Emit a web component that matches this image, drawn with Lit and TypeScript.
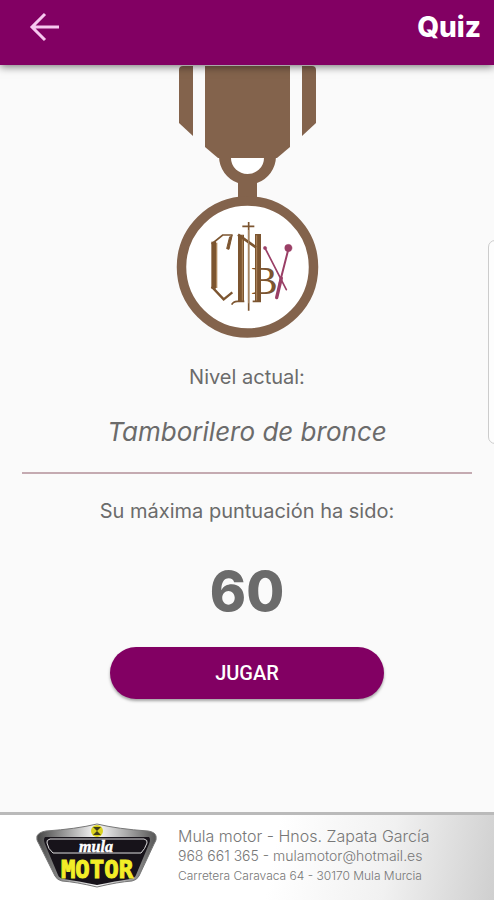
import { LitElement, html, css } from "lit";
import { customElement, property } from "lit/decorators.js";

@customElement("quiz-medal")
class QuizMedal extends LitElement {
  static styles = css`
    :host {
      display: block;
    }
    .medal {
      display: block;
      width: 151px;
      height: 272px;
    }
    .mono {
      font: 40px "Liberation Serif", serif;
    }
  `;

  render() {
    return html`
      <svg class="medal" viewBox="0 0 151 272" role="img" aria-label="Medalla de bronce">
        <g fill="#83634c">
          <path d="M7 4Q7 0 11 0H21V70L7 57Z" />
          <path d="M144 4Q144 0 140 0H130V70L144 57Z" />
          <path d="M33 0H118V81L105 92H46L33 81Z" />
          <path d="M47 91A28.5 28.5 0 0 0 66 117V136H85V117A28.5 28.5 0 0 0 104 91Z" />
        </g>
        <path d="M59 92H92A16.5 16 0 0 1 59 92Z" fill="#fff" />
        <circle cx="75.500" cy="201" r="66" fill="#fff" stroke="#83634c" stroke-width="9.500" />
        <text class="mono" x="79" y="228" fill="#7c5530">B</text>
        <g transform="translate(-2 124) scale(.33333)" fill="none" stroke="#7c5530">
          <path d="M131 155V296" stroke-width="14" />
          <path d="M140 158V294" stroke="#b08a60" stroke-width="4" />
          <path d="M125 162L158 135H187" stroke-width="5" />
          <path d="M187 134L177 178L170 176L179 140" fill="#7c5530" stroke-width="3" />
          <path d="M125 290L161 328L187 307" stroke-width="7" />
          <path d="M213 134V334M264 132V334" stroke-width="18" />
          <path d="M217 136V334M260 136V334" stroke="#b08a60" stroke-width="3" />
          <path d="M185 344Q190 334 202 334H223M248 334H273" stroke-width="5" />
          <path d="M236 120V340" stroke="#fff" stroke-width="16" />
          <path d="M204 134L258 172" stroke-width="8" />
          <path d="M236 96V362M217 109H253" stroke-width="5" />
          <path d="M236 120V340" stroke="#c8ab8a" stroke-width="2" />
        </g>
        <g transform="translate(-2 124) scale(.33333)" stroke="#9a3f66" fill="#9a3f66" stroke-linecap="round">
          <path d="M285 174L349 299" stroke-width="5" />
          <path d="M355 178L329 280" stroke-width="6" />
          <path d="M334 264L320 323" stroke-width="10" />
          <circle cx="285" cy="174" r="5" />
          <circle cx="355" cy="174" r="11" />
        </g>
      </svg>
    `;
  }
}

@customElement("sponsor-logo")
class SponsorLogo extends LitElement {
  static styles = css`
    :host {
      display: block;
    }
    .logo {
      display: block;
      width: 124px;
      height: 68px;
    }
    .script {
      font: italic bold 16px "Liberation Serif", serif;
    }
    .block {
      font: bold 24px "DejaVu Sans Mono", monospace;
    }
  `;

  render() {
    return html`
      <svg class="logo" viewBox="0 0 124 68" role="img" aria-label="Mula Motor">
        <defs>
          <linearGradient id="chrome">
            <stop offset="0" stop-color="#444" />
            <stop offset=".28" stop-color="#aaa" />
            <stop offset=".5" stop-color="#fafafa" />
            <stop offset=".75" stop-color="#aaa" />
            <stop offset="1" stop-color="#555" />
          </linearGradient>
        </defs>
        <path
          d="M3 15Q5 11 12 10Q42 8 63 3Q84 8 114 10Q121 11 122 15Q123 19 120 23L105 55Q103 59 98 60Q84 61 63 66Q42 61 28 60Q23 59 21 55L5 23Q2 19 3 15Z"
          fill="url(#chrome)"
          stroke="#777"
        />
        <path
          d="M11 16H115Q117 18 115 23L102 54Q101 57 96 58Q82 60 63 64Q44 60 30 58Q25 57 24 54L11 23Q9 18 11 16Z"
          fill="#17131a"
        />
        <path d="M16 18H110Q114 19 113 22Q111 28 107 32H19Q14 28 13 22Q12 19 16 18Z" fill="none" stroke="#ddd" />
        <circle cx="63" cy="10" r="6" fill="#d9d21f" />
        <path d="M63 10L59 6H67ZM63 10L59 14H67Z" fill="#3f3d1a" />
        <text class="script" x="62" y="31" text-anchor="middle" fill="#fff" stroke="#fff" stroke-width=".5">mula</text>
        <text class="block" x="63" y="57" text-anchor="middle" fill="#f2ee27" stroke="#f2ee27" stroke-width="1">MOTOR</text>
      </svg>
    `;
  }
}

@customElement("app-root")
class AppRoot extends LitElement {
  @property() level = "Tamborilero de bronce";
  @property({ type: Number }) score = 60;

  static styles = css`
    :host {
      display: flex;
      flex-direction: column;
      position: relative;
      min-height: 100vh;
      overflow: hidden;
      background: #fafafa;
      color: #6b6b6b;
      font-family: Inter, "Open Sans", sans-serif;
    }
    .bar {
      position: relative;
      display: flex;
      align-items: center;
      justify-content: space-between;
      height: 65px;
      padding: 0 13px 12px 25px;
      box-sizing: border-box;
      background: #820063;
      color: #fff;
      box-shadow: 0 2px 8px rgba(0, 0, 0, 0.5);
    }
    .back {
      display: flex;
      padding: 0;
      border: 0;
      background: none;
      color: #f7c8ef;
    }
    .back svg {
      width: 40px;
      height: 40px;
    }
    .title {
      margin: 0;
      font-size: 28px;
      line-height: 32px;
      font-weight: 800;
    }
    .content {
      display: flex;
      flex-direction: column;
      align-items: center;
      padding: 1px 22px 24px;
      text-align: center;
    }
    .label {
      margin: 0;
      font-size: 20px;
      line-height: 24px;
    }
    .first {
      margin-top: 27px;
    }
    .level {
      margin: 27px 0 24px;
      font-size: 26px;
      line-height: 32px;
      font-style: italic;
    }
    .rule {
      width: 100%;
      height: 2px;
      margin: 0 0 25px;
      border: 0;
      background: #c4aab1;
    }
    .score {
      margin: 36px 0 24px;
      font-size: 55px;
      line-height: 64px;
      font-weight: 800;
    }
    .play {
      width: 61%;
      height: 52px;
      border: 0;
      border-radius: 26px;
      background: #820063;
      color: #fff;
      font: 500 20px/24px Roboto, sans-serif;
      box-shadow: 0 2px 3px rgba(0, 0, 0, 0.35);
    }
    .drawer {
      position: absolute;
      top: 240px;
      right: -8px;
      width: 14px;
      height: 204px;
      box-sizing: border-box;
      border: 1px solid #ccc;
      border-radius: 8px;
      background: #fdfdfd;
    }
    .sponsor {
      display: flex;
      gap: 20px;
      height: 88px;
      margin-top: auto;
      padding: 6px 0 0 34px;
      box-sizing: border-box;
      border-top: 3px solid #bababa;
      background: linear-gradient(100deg, #fff 55%, #f1f1f1 78%, #cfcfcf);
    }
    .contact {
      padding-top: 5px;
      font-style: normal;
      font-weight: 300;
      color: #777;
      white-space: nowrap;
    }
    .line {
      margin: 0;
      font-size: 14px;
      line-height: 20px;
    }
    .name {
      font-size: 16px;
    }
    .street {
      font-size: 12px;
    }
  `;

  render() {
    return html`
      <header class="bar">
        <button class="back" aria-label="Volver">
          <svg viewBox="0 0 40 40" fill="none" stroke="currentColor" stroke-width="3">
            <path d="M34 20H8M20 7L7 20L20 33" />
          </svg>
        </button>
        <h1 class="title">Quiz</h1>
      </header>
      <main class="content">
        <quiz-medal></quiz-medal>
        <p class="label first">Nivel actual:</p>
        <p class="level">${this.level}</p>
        <hr class="rule" />
        <p class="label">Su máxima puntuación ha sido:</p>
        <p class="score">${this.score}</p>
        <button class="play">JUGAR</button>
      </main>
      <aside class="drawer"></aside>
      <footer class="sponsor">
        <sponsor-logo></sponsor-logo>
        <address class="contact">
          <p class="line name">Mula motor - Hnos. Zapata García</p>
          <p class="line">968 661 365 - mulamotor@hotmail.es</p>
          <p class="line street">Carretera Caravaca 64 - 30170 Mula Murcia</p>
        </address>
      </footer>
    `;
  }
}
